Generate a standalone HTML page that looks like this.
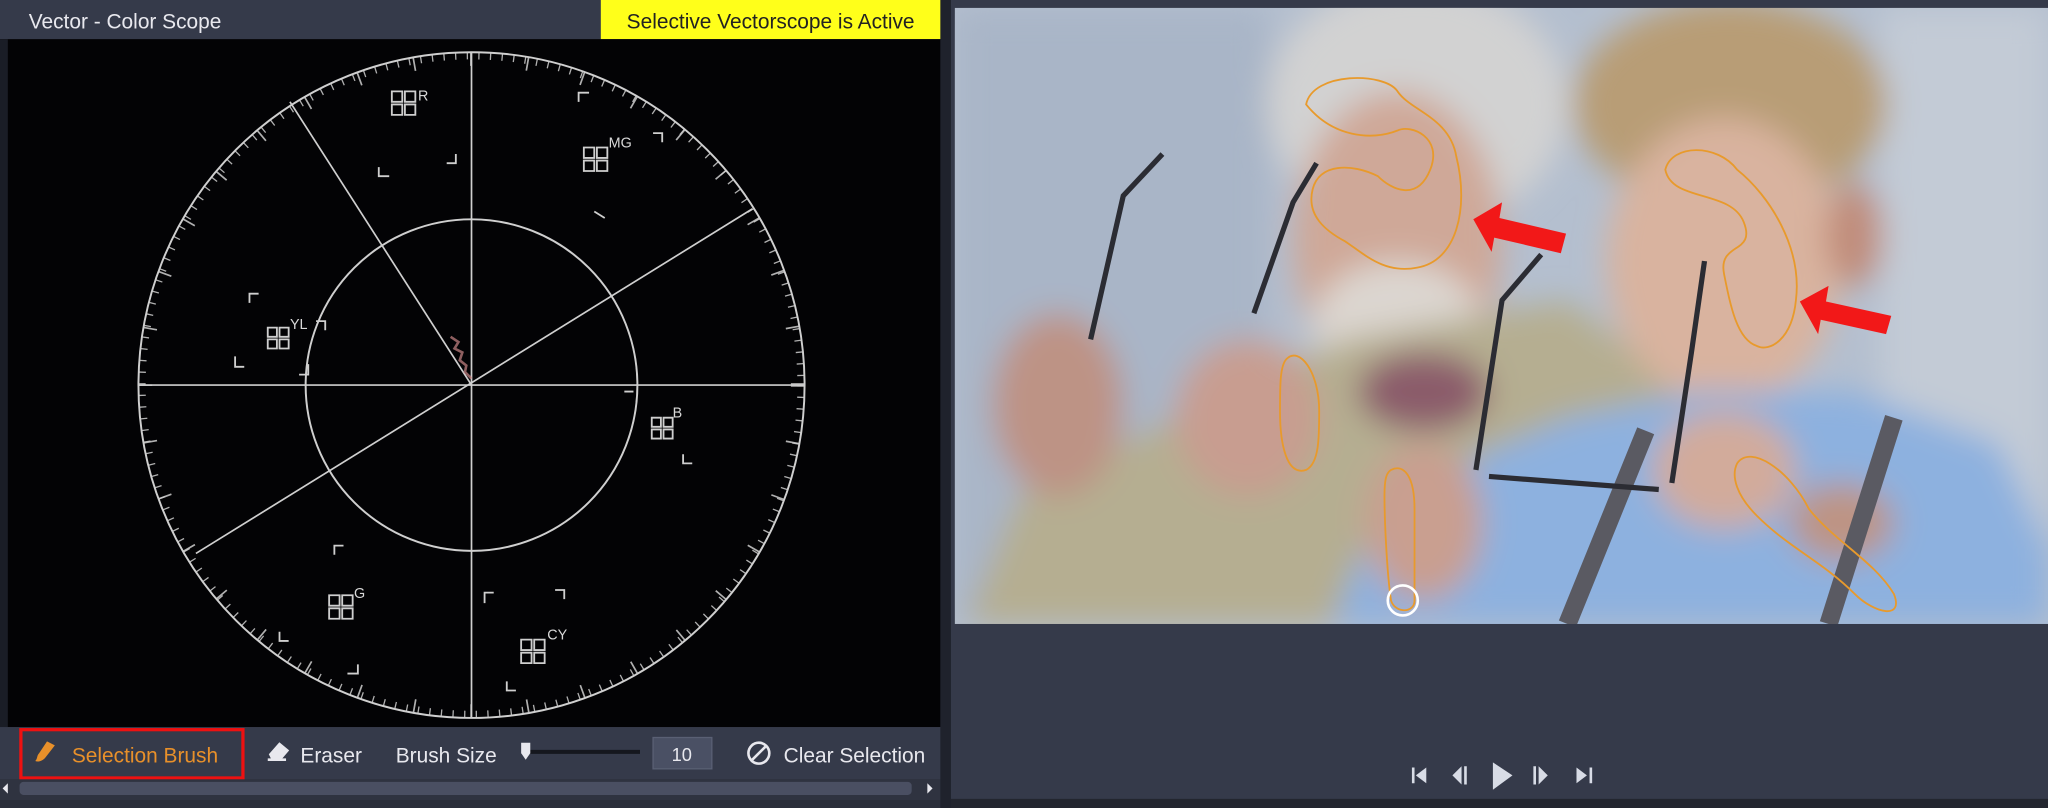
<!DOCTYPE html>
<html><head><meta charset="utf-8"><style>
html,body{margin:0;padding:0;background:#2a2e3a;overflow:hidden}
svg{display:block}
text{font-family:"Liberation Sans",sans-serif}
</style></head><body>
<svg width="2048" height="808" viewBox="0 0 1568 619" preserveAspectRatio="none" xmlns="http://www.w3.org/2000/svg">
<defs>
<filter id="b" x="-50%" y="-50%" width="200%" height="200%"><feGaussianBlur stdDeviation="12"/></filter>
<clipPath id="ph"><rect x="731" y="6" width="837" height="472"/></clipPath>
</defs>
<rect width="1568" height="619" fill="#2a2e3a"/>
<rect x="0" y="0" width="720" height="30" fill="#353a4a"/>
<text x="22" y="22" font-size="16" fill="#e8e8ee">Vector - Color Scope</text>
<rect x="460" y="0" width="260" height="30" fill="#ffff1a"/>
<text x="590" y="22" font-size="16" fill="#222" text-anchor="middle">Selective Vectorscope is Active</text>
<rect x="0" y="30" width="720" height="527" fill="#030305"/>
<rect x="0" y="30" width="6" height="527" fill="#1a1d26"/>
<g stroke="#cfcfcf" fill="none">
<circle cx="361" cy="295" r="255" stroke-width="1.5"/>
<circle cx="361" cy="295" r="252" stroke-width="5" stroke-dasharray="1 7.9" opacity="0.85"/>
<circle cx="361" cy="295" r="249.5" stroke-width="10" stroke-dasharray="1.3 42.2" opacity="0.85"/>
<circle cx="361" cy="295" r="127" stroke-width="1.5"/>
<line x1="106" y1="295" x2="616" y2="295" stroke-width="1.3"/>
<line x1="361" y1="40" x2="361" y2="550" stroke-width="1.3"/>
<line x1="222" y1="78" x2="361" y2="295" stroke-width="1.3"/>
<line x1="150" y1="424" x2="576" y2="160" stroke-width="1.3"/>
<g stroke-width="1.4">
<path d="M300 70h8v8h-8zM310 70h8v8h-8zM300 80h8v8h-8zM310 80h8v8h-8z"/>
<path d="M447 113h8v8h-8zM457 113h8v8h-8zM447 123h8v8h-8zM457 123h8v8h-8z"/>
<path d="M205 251h7v7h-7zM214 251h7v7h-7zM205 260h7v7h-7zM214 260h7v7h-7z"/>
<path d="M499 320h7v7h-7zM508 320h7v7h-7zM499 329h7v7h-7zM508 329h7v7h-7z"/>
<path d="M252 456h8v8h-8zM262 456h8v8h-8zM252 466h8v8h-8zM262 466h8v8h-8z"/>
<path d="M399 490h8v8h-8zM409 490h8v8h-8zM399 500h8v8h-8zM409 500h8v8h-8z"/>
<path d="M443 78v-7h8M500 102h7v7M290 128v7h8M342 125h7v-7M455 162l8 5M191 232v-7h7M242 246h7v7M180 273v8h7M236 279v8h-7M485 300h-7M530 355h-7v-7M256 425v-7h7M214 484v7h7M266 516h8v-7M371 462v-8h7M425 452h7v7M388 522v7h7"/>
</g>
</g>
<g fill="#d8d8d8" font-size="11">
<text x="320" y="77">R</text><text x="466" y="113">MG</text><text x="222" y="252">YL</text>
<text x="515" y="320">B</text><text x="271" y="458">G</text><text x="419" y="490">CY</text>
</g>
<path d="M345 258l6 4-3 5 6 3-2 6 5 4-1 5 5 5" stroke="#c88" stroke-width="2" fill="none" opacity="0.7"/>
<rect x="0" y="557" width="720" height="40" fill="#353a4a"/>
<rect x="16" y="559" width="170" height="37" fill="none" stroke="#e11" stroke-width="2.5"/>
<path d="M36 568l6 3-7 9c-2 3-6 4-8 3 2-2 1-4 3-6z" fill="#e8902a"/>
<text x="55" y="584" font-size="16" fill="#e8902a">Selection Brush</text>
<path d="M205 582h14M207 578l7-8 6 5-6 7h-5z" stroke="#e8e8ee" stroke-width="2" fill="#e8e8ee"/>
<text x="230" y="584" font-size="16" fill="#e8e8ee">Eraser</text>
<text x="303" y="584" font-size="16" fill="#e8e8ee">Brush Size</text>
<line x1="404" y1="576" x2="490" y2="576" stroke="#15171e" stroke-width="3"/>
<path d="M399 569h7v8l-3.5 5-3.5-5z" fill="#e8e8ee"/>
<rect x="500" y="565" width="45" height="24" fill="#4a5064" stroke="#5a6074"/>
<text x="522" y="583" font-size="14" fill="#e8e8ee" text-anchor="middle">10</text>
<circle cx="581" cy="577" r="8" stroke="#e8e8ee" stroke-width="2" fill="none"/>
<line x1="576" y1="582" x2="586" y2="572" stroke="#e8e8ee" stroke-width="2"/>
<text x="600" y="584" font-size="16" fill="#e8e8ee">Clear Selection</text>
<rect x="0" y="597" width="720" height="16" fill="#2f3340"/>
<rect x="15" y="599" width="683" height="10" rx="3" fill="#4a4f62"/>
<path d="M6 600v8l-4-4z M710 600v8l4-4z" fill="#e8e8ee"/>
<rect x="728" y="0" width="840" height="619" fill="#353a4a"/>
<rect x="720" y="0" width="8" height="619" fill="#1f222c"/>
<rect x="728" y="612" width="840" height="7" fill="#23262f"/>
<g clip-path="url(#ph)">
<rect x="731" y="6" width="837" height="472" fill="#b4bfcf"/>
<g filter="url(#b)">
<rect x="731" y="6" width="240" height="472" fill="#a9b5c7"/>
<rect x="1440" y="6" width="128" height="472" fill="#c3cbd6"/>
<ellipse cx="1085" cy="80" rx="115" ry="95" fill="#d2d2d2"/>
<ellipse cx="1070" cy="185" rx="80" ry="115" fill="#cfa898"/>
<ellipse cx="1070" cy="250" rx="65" ry="50" fill="#dcd6d0"/>
<path d="M740 478 L780 380 L900 320 L1030 260 L1200 230 L1290 300 L1250 478Z" fill="#b5ae91"/>
<ellipse cx="1090" cy="300" rx="50" ry="30" fill="#8b5c6a"/>
<ellipse cx="810" cy="310" rx="50" ry="70" fill="#bd9385"/>
<ellipse cx="955" cy="320" rx="55" ry="60" fill="#c89d90"/>
<ellipse cx="1325" cy="80" rx="120" ry="80" fill="#b89d76"/>
<ellipse cx="1320" cy="200" rx="90" ry="110" fill="#d9b39f"/>
<ellipse cx="1420" cy="180" rx="22" ry="40" fill="#c08c7a"/>
<path d="M1020 478 L1060 380 L1200 320 L1300 300 L1420 300 L1530 340 L1568 420 L1568 478Z" fill="#8db1df"/>
<ellipse cx="1090" cy="400" rx="45" ry="60" fill="#c99f90"/>
<ellipse cx="1320" cy="360" rx="55" ry="45" fill="#d2ab9b"/>
<ellipse cx="1410" cy="400" rx="40" ry="30" fill="#bd9484"/>
</g>
<g stroke="#2b2c33" stroke-width="5" fill="none">
<path d="M1200 478 L1260 330 M1400 478 L1450 320" stroke="#5a5a62" stroke-width="14"/>
<path d="M890 118 L860 150 L835 260 M1008 125 L990 155 L960 240" stroke-width="4"/>
<path d="M1180 195 L1150 230 L1130 360 M1305 200 L1295 270 L1280 370" stroke-width="4"/>
<path d="M1140 365 L1270 375" stroke-width="4"/>
</g>
</g>
<g stroke="#e89a2c" stroke-width="1.4" fill="none">
<path d="M1000 80c5-25 60-25 70-10 10 15 40 20 45 50 10 40 0 80-30 85-25 5-40-10-55-20-15-8-30-20-25-40 5-20 30-20 50-10 10 10 30 20 40-5 10-25-15-35-25-30-20 8-50 5-70-20z"/>
<path d="M1275 130c5-20 40-20 55 0 25 20 50 60 45 100-3 30-20 40-30 35-15-5-20-30-25-55-5-25 25-15 15-40-10-25-55-15-60-40z"/>
<path d="M985 275c10-10 25 10 25 40 0 20 0 40-10 45-15 5-20-20-20-45 0-20 0-35 5-40z"/>
<path d="M1065 360c10-5 18 5 18 30v70c0 10-15 10-18 0-3-20-5-60-5-80 0-15 2-18 5-20z"/>
<path d="M1330 355c10-15 40 5 55 35 20 25 50 40 65 65 8 20-15 15-30 0-25-25-50-35-75-60-15-15-20-30-15-40z"/>
</g>
<circle cx="1074" cy="460" r="11.5" fill="none" stroke="#fff" stroke-width="2"/>
<path d="M1128 168 L1150 155 L1148 167 L1199 179 L1195 194 L1144 182 L1142 193 Z" fill="#f21818"/>
<path d="M1378 231 L1400 219 L1398 231 L1448 242 L1444 256 L1394 245 L1392 256 Z" fill="#f21818"/>
<g fill="#d8dce6">
<path d="M1081 588h2v12h-2zM1084 594l8-6v12z"/>
<path d="M1112 594l7-7v14zM1121 587h2v14h-2z"/>
<path d="M1143 584l15 10-15 11z"/>
<path d="M1174 587h2v14h-2zM1178 587l7 7-7 7z"/>
<path d="M1207 588l8 6-8 6zM1217 588h2v12h-2z"/>
</g>
</svg>
</body></html>
